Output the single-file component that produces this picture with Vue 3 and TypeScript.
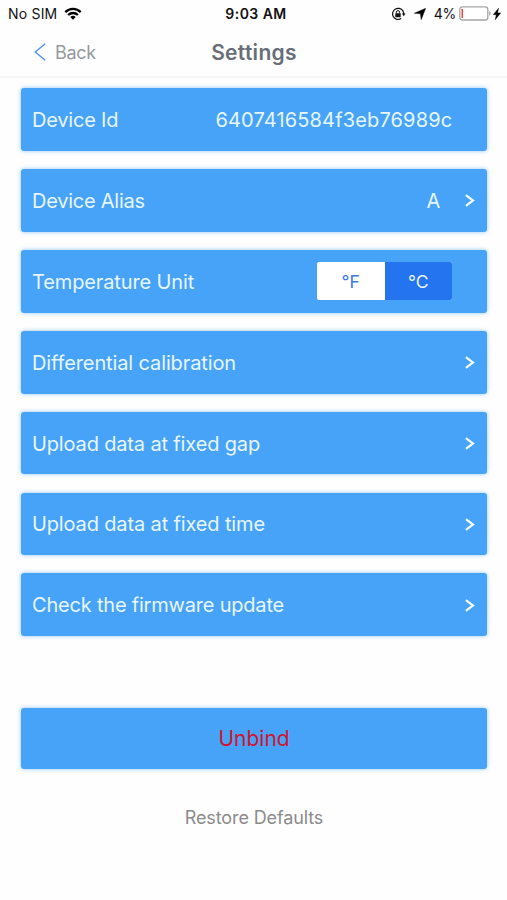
<script setup lang="ts">
import { ref } from 'vue'

interface Row {
  label: string
  spacing: number
  value?: string
  kind: 'value' | 'link' | 'unit'
}

const rows: Row[] = [
  { label: 'Device Id', spacing: -0.2, value: '6407416584f3eb76989c', kind: 'value' },
  { label: 'Device Alias', spacing: -0.25, value: 'A', kind: 'link' },
  { label: 'Temperature Unit', spacing: -0.12, kind: 'unit' },
  { label: 'Differential calibration', spacing: -0.12, kind: 'link' },
  { label: 'Upload data at fixed gap', spacing: -0.15, kind: 'link' },
  { label: 'Upload data at fixed time', spacing: -0.14, kind: 'link' },
  { label: 'Check the firmware update', spacing: -0.2, kind: 'link' },
]

const units = ['℉', '℃'] as const
const unit = ref<'℉' | '℃'>('℃')
</script>

<template>
  <main class="screen">
    <div class="status">
      <div class="status-left">
        <span class="carrier">No SIM</span>
        <svg class="wifi" width="18" height="14" viewBox="0 0 18 14" fill="none" stroke="#000" stroke-width="2.3">
          <path d="M1.3 5.1C5.6 .8 12.4 .8 16.7 5.1" />
          <path d="M4.1 8C6.9 5.3 11.1 5.3 13.9 8" />
          <path d="M6.3 9.9C7.9 8.5 10.1 8.5 11.7 9.9L9 12.8Z" fill="#000" stroke="none" />
        </svg>
      </div>
      <span class="clock">9:03 AM</span>
      <div class="status-right">
        <svg class="lock" width="15" height="14" viewBox="0 0 15 14" fill="none" stroke="#111">
          <path d="M11.9 3.9A5.6 5.6 0 1 0 10.2 11.6M11.9 3.9A5.6 5.6 0 0 1 12.7 7.5" stroke-width="1.2" />
          <path d="M10.9 6.6H14.5L12.7 9.3Z" fill="#111" stroke="none" />
          <rect x="4.3" y="6.2" width="5.4" height="4" rx=".5" fill="#111" stroke="none" />
          <path d="M5.4 6.4V5.2a1.6 1.6 0 0 1 3.2 0V6.4" stroke-width="1" />
        </svg>
        <svg class="arrow" width="12" height="12" viewBox="0 0 12 12"><path d="M11.7.3 7.2 11.7 6.4 5.8 .2 5.3Z" fill="#000" stroke="#000" stroke-width=".4" /></svg>
        <span class="percent">4%</span>
        <svg class="battery" width="33" height="15" viewBox="0 0 33 15">
          <rect x=".8" y=".8" width="28" height="13.2" rx="2.6" fill="#fff" stroke="#a5a5a5" stroke-width="1.3" />
          <rect x="2.5" y="2.8" width="1.5" height="9.2" rx=".5" fill="#f5403c" />
          <path d="M30.2 5.3C32.2 5.8 32.2 9 30.2 9.5Z" fill="#a5a5a5" />
        </svg>
        <svg class="bolt" width="8" height="12" viewBox="0 0 8 12"><path d="M5.5.2.3 6.7H3.3L2.2 11.8 7.7 4.9H4.6Z" fill="#000" stroke="#000" stroke-width=".4" /></svg>
      </div>
    </div>

    <header class="nav">
      <button class="back">
        <svg width="12" height="18" viewBox="0 0 12 18" fill="none" stroke="#508ff3" stroke-width="1.4"><path d="M11.2.8 1.3 9l9.9 8.2" /></svg>
        <span>Back</span>
      </button>
      <h1>Settings</h1>
    </header>

    <section class="list">
      <div v-for="row in rows" :key="row.label" class="row">
        <span class="label" :style="{ letterSpacing: row.spacing + 'px' }">{{ row.label }}</span>
        <span v-if="row.value" class="value" :class="{ id: row.kind === 'value' }">{{ row.value }}</span>
        <div v-if="row.kind === 'unit'" class="toggle">
          <button v-for="u in units" :key="u" :class="{ active: unit === u }" @click="unit = u">{{ u }}</button>
        </div>
        <svg v-if="row.kind === 'link'" class="chevron" width="10" height="13" viewBox="0 0 10 13" fill="none" stroke="#f2faff" stroke-width="2.2"><path d="M.9 1.1 8 6.5.9 11.9" /></svg>
      </div>
    </section>

    <button class="unbind">Unbind</button>
    <button class="restore">Restore Defaults</button>
  </main>
</template>

<style>
body {
  background: #fefefe;
}
</style>

<style scoped>
.screen {
  width: 507px;
  height: 900px;
  box-sizing: border-box;
  overflow: hidden;
  background: #fefefe;
  font-family: Inter, "Liberation Sans", sans-serif;
}
button {
  border: 0;
  padding: 0;
  margin: 0;
  background: none;
  font: inherit;
  color: inherit;
}
.status {
  height: 27px;
  padding: 0 5px 0 8px;
  display: grid;
  grid-template-columns: 1fr auto 1fr;
  align-items: center;
  font-size: 14px;
  line-height: 27px;
  color: #111;
}
.status-left,
.status-right {
  display: flex;
  align-items: center;
}
.status-right {
  justify-content: flex-end;
}
.carrier {
  letter-spacing: 0.2px;
}
.wifi {
  margin-left: 7px;
}
.clock {
  padding-left: 2px;
  font-weight: 600;
  letter-spacing: 0.45px;
}
.arrow {
  margin-left: 8px;
}
.percent {
  margin-left: 8px;
  letter-spacing: -0.3px;
}
.battery {
  margin-left: 3px;
}
.bolt {
  margin-left: 1px;
  margin-right: 1px;
}
.nav {
  height: 48px;
  padding-top: 1px;
  border-bottom: 2px solid #f5f5f6;
  box-sizing: content-box;
  display: grid;
  grid-template-columns: 1fr auto 1fr;
  align-items: center;
}
.back {
  display: flex;
  align-items: center;
  gap: 9px;
  padding-left: 34px;
  font-size: 18px;
  letter-spacing: -0.3px;
  color: #97999d;
}
h1 {
  margin: 0;
  padding: 1px 0 0 1px;
  font-size: 21px;
  line-height: 47px;
  font-weight: 600;
  letter-spacing: 0.3px;
  color: #686e78;
}
.list {
  display: grid;
  gap: 18.2px;
  padding: 10.2px 20.2px 0 21.3px;
}
.row,
.unbind {
  background: #46a3f7;
  border-radius: 3px;
  box-shadow: 0 0 4px rgba(70, 163, 247, 0.6);
}
.row {
  height: 62.7px;
  box-sizing: border-box;
  display: flex;
  align-items: center;
  padding: 1px 11.5px 0 10.7px;
  font-size: 20px;
  color: #e8f6ff;
}
.label {
  flex: 1;
  white-space: nowrap;
}
.value {
  margin-right: 25px;
}
.value.id {
  margin-right: 23px;
  letter-spacing: 0.15px;
}
.toggle {
  width: 135px;
  height: 38px;
  margin: -1px 23.3px 0 0;
  display: grid;
  grid-template-columns: 1fr 1fr;
  border-radius: 2px;
  overflow: hidden;
  background: #fff;
}
.toggle button {
  padding-top: 2px;
  font-family: "Liberation Sans", Inter, "Noto Sans CJK SC", sans-serif;
  font-size: 17.5px;
  line-height: 36px;
  color: #3c77e8;
}
.toggle button.active {
  background: #2474f0;
  color: #eef6ff;
}
.unbind {
  display: block;
  width: 465.5px;
  height: 60.5px;
  margin: 72px 0 0 21.3px;
  font-size: 21px;
  color: #d3142c;
}
.restore {
  display: block;
  margin: 38px auto 0;
  padding-left: 1px;
  font-size: 18px;
  line-height: 22px;
  letter-spacing: -0.12px;
  color: #8b8b8b;
}
</style>
